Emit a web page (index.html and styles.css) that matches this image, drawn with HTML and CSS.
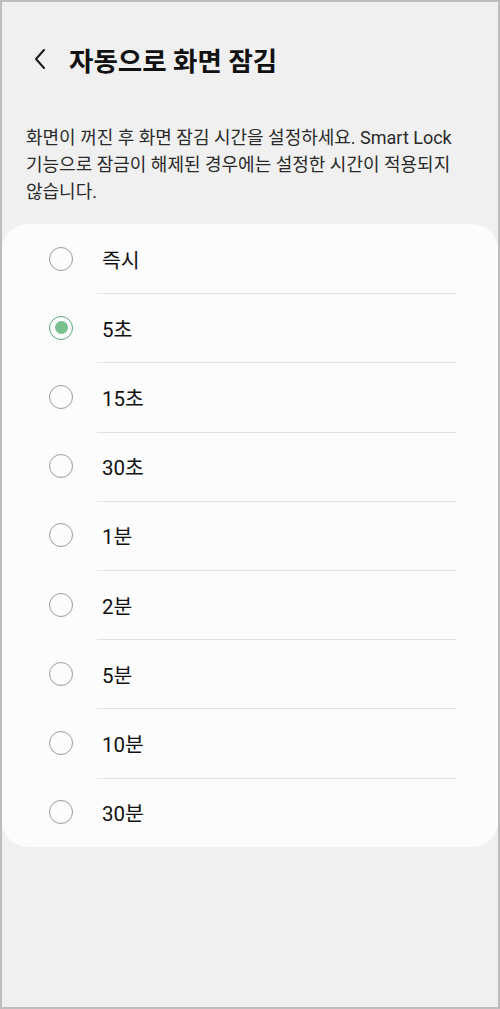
FILE: index.html
```html
<!DOCTYPE html>
<html lang="ko">
<head>
  <meta charset="UTF-8">
  <meta name="viewport" content="width=device-width, initial-scale=1.0">
  <title>자동으로 화면 잠김</title>
  <link rel="stylesheet" href="styles.css">
</head>
<body>
  <div class="screen">
    <div class="header">
      <svg class="back" width="14" height="22" viewBox="0 0 14 22">
        <path d="M11 2 L3 11 L11 20" fill="none" stroke="#1a1a1a" stroke-width="2" stroke-linecap="round" stroke-linejoin="round"/>
      </svg>
      <h1>자동으로 화면 잠김</h1>
    </div>

    <p class="desc">화면이 꺼진 후 화면 잠김 시간을 설정하세요. Smart Lock 기능으로 잠금이 해제된 경우에는 설정한 시간이 적용되지 않습니다.</p>

    <!-- Timeout options -->
    <div class="card">
      <div class="option"><span class="radio"></span><span class="label">즉시</span></div>
      <div class="option selected"><span class="radio"></span><span class="label">5초</span></div>
      <div class="option"><span class="radio"></span><span class="label">15초</span></div>
      <div class="option"><span class="radio"></span><span class="label">30초</span></div>
      <div class="option"><span class="radio"></span><span class="label">1분</span></div>
      <div class="option"><span class="radio"></span><span class="label">2분</span></div>
      <div class="option"><span class="radio"></span><span class="label">5분</span></div>
      <div class="option"><span class="radio"></span><span class="label">10분</span></div>
      <div class="option"><span class="radio"></span><span class="label">30분</span></div>
    </div>
  </div>
</body>
</html>
```

FILE: styles.css
```css
body {
  margin: 0;
  font-family: Roboto, "Noto Sans CJK KR", sans-serif;
  background-color: #f0f0f0;
}

.screen {
  box-sizing: border-box;
  height: 1009px;
  border: 2px solid #bdbdbd;
  background-color: #f0f0f0;
}

.header {
  display: flex;
  align-items: center;
  height: 56px;
  margin-top: 29px;
  padding-left: 31px;
}

.back {
  margin-right: 22px;
}

h1 {
  margin: 0;
  font-size: 26.5px;
  font-weight: 700;
  color: #111;
}

.desc {
  margin: 37px 22px 0 24px;
  font-size: 18px;
  line-height: 27px;
  color: #2a2a2a;
  word-break: keep-all;
}

.card {
  margin-top: 19px;
  background-color: #fcfcfc;
  border-radius: 26px;
}

.option {
  display: flex;
  align-items: center;
  height: 69.2px;
  padding-left: 47px;
  position: relative;
}

.option + .option::before {
  content: "";
  position: absolute;
  top: 0;
  left: 95px;
  right: 42px;
  height: 1px;
  background-color: #e2e2e2;
}

.radio {
  box-sizing: border-box;
  width: 24px;
  height: 24px;
  border: 1.5px solid #9a9a9a;
  border-radius: 50%;
  display: flex;
  align-items: center;
  justify-content: center;
  margin-right: 29px;
}

.selected .radio {
  border-color: #5fa779;
}

.selected .radio::after {
  content: "";
  width: 13px;
  height: 13px;
  border-radius: 50%;
  background-color: #79c08f;
}

.label {
  font-size: 20.5px;
  color: #111;
}
```
